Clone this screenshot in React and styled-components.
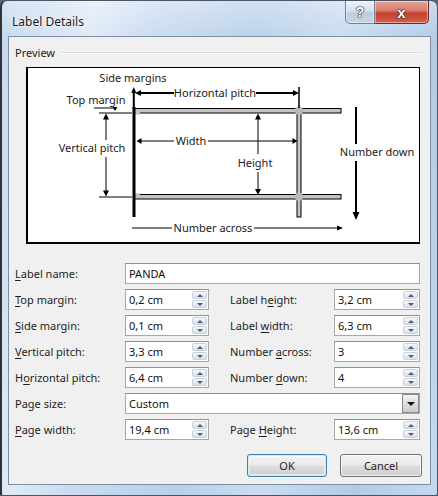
import React from "react";
import styled, { createGlobalStyle } from "styled-components";

const Global = createGlobalStyle`
  html, body { margin: 0; padding: 0; background: #5a6470; }
  body { font-family: "Noto Sans", "Open Sans", sans-serif; }
  * { box-sizing: border-box; }
`;

const Window = styled.div`
  width: 438px;
  height: 496px;
  display: flex;
  flex-direction: column;
  border: 1px solid #4a5666;
  border-left: 2px solid #2f3338;
  border-radius: 7px 7px 3px 3px;
  background:
    linear-gradient(180deg, rgba(255,255,255,0.35) 0%, rgba(255,255,255,0) 40px),
    linear-gradient(100deg, #c3d7ed 0%, #dfeaf6 18%, #c9dbef 30%, #b9d0ea 50%, #cadcf0 66%, #b3cbe7 84%, #c6d9ee 100%);
  overflow: hidden;
`;

const TitleBar = styled.div`
  height: 35px;
  display: flex;
  align-items: flex-start;
  justify-content: space-between;
`;

const Title = styled.div`
  padding: 12px 0 0 10px;
  font-size: 12px;
  color: #1b1b1b;
  text-shadow: 0 0 6px #fff, 0 0 3px #fff;
`;

const Caption = styled.div`
  display: flex;
  margin-right: 8px;
`;

const CapBtn = styled.div`
  height: 23px;
  width: ${(p) => (p.$close ? "54px" : "30px")};
  display: flex;
  align-items: center;
  justify-content: center;
  border: 1px solid ${(p) => (p.$close ? "#6d2a22" : "#6f7f92")};
  border-top: none;
  border-left: ${(p) => (p.$close ? "none" : undefined)};
  border-radius: ${(p) => (p.$close ? "0 0 5px 0" : "0 0 0 5px")};
  background: ${(p) =>
    p.$close
      ? "linear-gradient(180deg, #e9a899 0%, #d9776a 45%, #c4402f 55%, #d2604a 100%)"
      : "linear-gradient(180deg, #eef3f8 0%, #d5e0ec 45%, #bccbdc 55%, #c9d6e4 100%)"};
  box-shadow: inset 0 0 0 1px rgba(255,255,255,0.45);
  font-family: "Liberation Sans", Arial, sans-serif;
  font-weight: bold;
  font-size: ${(p) => (p.$close ? "15px" : "14px")};
  color: #fff;
  text-shadow: 0 0 1px #222, 0 0 1px #222, 0 0 2px #333;
`;

const Client = styled.div`
  margin: 0 6px 0 6px;
  background: #f0f0f0;
  border: 1px solid #7d8ea3;
  display: flex;
  flex-direction: column;
  padding: 0 0 7px 0;
`;

const GroupHeader = styled.div`
  display: flex;
  align-items: center;
  gap: 6px;
  height: 16px;
  margin: 7px 7px 0 6px;
  font-size: 11px;
  color: #1e1e1e;
`;

const GroupLine = styled.div`
  flex: 1;
  height: 2px;
  border-top: 1px solid #d5dfe5;
  border-bottom: 1px solid #ffffff;
  margin-top: 2px;
`;

const PreviewBox = styled.div`
  margin: 7px 0 0 17px;
  width: 394px;
  height: 177px;
  background: #fff;
  border-style: solid;
  border-color: #000;
  border-width: 1px 1px 2px 2px;
  display: flex;
`;

const Form = styled.div`
  margin: 19px 0 0 6px;
  display: grid;
  grid-template-columns: 110px 84px 21px 104px 86px;
  grid-auto-rows: 21px;
  row-gap: 5px;
  align-items: center;
  font-size: 11px;
  color: #1e1e1e;
`;

const Label = styled.div`
  grid-column: ${(p) => p.$col || "auto"};
  white-space: nowrap;
  u { text-decoration-thickness: 1px; text-underline-offset: 2px; }
`;

const Field = styled.div`
  grid-column: ${(p) => p.$span || "auto"};
  height: 21px;
  display: flex;
  align-items: stretch;
  background: #fff;
  border: 1px solid #a3a8b0;
  border-top-color: #8d929a;
  padding: 1px;
`;

const Value = styled.div`
  flex: 1;
  padding-left: 2px;
  line-height: 17px;
  font-size: 11px;
  color: #111;
  white-space: nowrap;
`;

const Spin = styled.div`
  width: 15px;
  display: flex;
  flex-direction: column;
  gap: 1px;
`;

const SpinBtn = styled.div`
  flex: 1;
  display: flex;
  align-items: center;
  justify-content: center;
  border: 1px solid #c9d1db;
  border-radius: 2px;
  background: linear-gradient(180deg, #f6f8fa 0%, #e6ebf1 50%, #d9e0e9 100%);
`;

const Tri = styled.div`
  width: 0;
  height: 0;
  border-left: 3px solid transparent;
  border-right: 3px solid transparent;
  ${(p) =>
    p.$up
      ? "border-bottom: 3px solid #4b5d7e;"
      : "border-top: 3px solid #4b5d7e;"}
`;

const DropBtn = styled.div`
  width: 17px;
  margin: -1px -1px -1px 0;
  display: flex;
  align-items: center;
  justify-content: center;
  border: 1px solid #8a8a8a;
  background: linear-gradient(180deg, #f2f2f2 0%, #dedede 50%, #cdcdcd 100%);
`;

const DropTri = styled.div`
  width: 0;
  height: 0;
  border-left: 4px solid transparent;
  border-right: 4px solid transparent;
  border-top: 4px solid #111;
`;

const Buttons = styled.div`
  display: flex;
  justify-content: flex-end;
  gap: 13px;
  margin: 14px 8px 0 0;
`;

const Btn = styled.div`
  width: ${(p) => (p.$default ? "80px" : "82px")};
  height: 23px;
  display: flex;
  align-items: center;
  justify-content: center;
  font-size: 11px;
  color: #1e1e1e;
  border: 1px solid ${(p) => (p.$default ? "#3c7fb1" : "#707070")};
  border-radius: 3px;
  background: linear-gradient(180deg, #f2f2f2 0%, #ebebeb 49%, #dddddd 51%, #cfcfcf 100%);
  box-shadow: ${(p) =>
    p.$default
      ? "inset 0 0 0 1px #c5ecfc, inset 0 0 0 2px rgba(255,255,255,0.5)"
      : "inset 0 0 0 1px rgba(255,255,255,0.7)"};
`;

const BottomFrame = styled.div`
  flex: 1;
`;

const SpinField = ({ value }) => (
  <Field>
    <Value>{value}</Value>
    <Spin>
      <SpinBtn>
        <Tri $up />
      </SpinBtn>
      <SpinBtn>
        <Tri />
      </SpinBtn>
    </Spin>
  </Field>
);

const up = (x, y, w = 3, h = 6) => `${x},${y} ${x - w},${y + h} ${x + w},${y + h}`;
const down = (x, y, w = 3, h = 6) => `${x},${y} ${x - w},${y - h} ${x + w},${y - h}`;
const left = (x, y, w = 3, h = 6) => `${x},${y} ${x + h},${y - w} ${x + h},${y + w}`;
const right = (x, y, w = 3, h = 6) => `${x},${y} ${x - h},${y - w} ${x - h},${y + w}`;

const Diagram = () => (
  <svg viewBox="29 68 391 174" width="391" height="174">
    <g stroke="#000" fill="none">
      {/* label sheet */}
      <rect x="135" y="108.5" width="207" height="4.5" fill="#c4c4c4" strokeWidth="1" />
      <rect x="135" y="194.5" width="207" height="4.5" fill="#c4c4c4" strokeWidth="1" />
      <rect x="298" y="112" width="4" height="105" fill="#c4c4c4" strokeWidth="1" />
    </g>
    <g fill="#b9b9b9">
      <circle cx="300" cy="110.8" r="4.2" />
      <circle cx="300" cy="196.8" r="4.2" />
      <circle cx="138.5" cy="112.5" r="2.5" fill="#c4c4c4" />
      <circle cx="138.5" cy="195.5" r="2.5" fill="#c4c4c4" />
    </g>
    <rect x="133.5" y="107" width="3" height="110" fill="#000" />
    <rect x="133.8" y="89" width="2" height="20" fill="#000" />
    <polygon points={up(134.8, 87, 2.5, 6)} fill="#000" />

    <g stroke="#000" fill="none">
      {/* horizontal pitch */}
      <line x1="140" y1="93" x2="175" y2="93" strokeWidth="2" />
      <line x1="257" y1="93" x2="297" y2="93" strokeWidth="2" />
      <line x1="300" y1="87" x2="300" y2="108" strokeWidth="1.5" />
      {/* top margin */}
      <line x1="95" y1="108" x2="116" y2="108" strokeWidth="1" />
      <line x1="100" y1="113" x2="133" y2="113" strokeWidth="1" />
      {/* vertical pitch */}
      <line x1="107" y1="118" x2="107" y2="140" strokeWidth="1" />
      <line x1="107" y1="157" x2="107" y2="192" strokeWidth="1" />
      <line x1="100" y1="197" x2="133" y2="197" strokeWidth="1" />
      {/* width */}
      <line x1="141" y1="141" x2="175" y2="141" strokeWidth="1" />
      <line x1="209" y1="141" x2="295" y2="141" strokeWidth="1" />
      {/* height */}
      <line x1="259" y1="118" x2="259" y2="154" strokeWidth="1" />
      <line x1="259" y1="172" x2="259" y2="190" strokeWidth="1" />
      {/* number down */}
      <line x1="357" y1="107" x2="357" y2="144" strokeWidth="2" />
      <line x1="357" y1="161" x2="357" y2="213" strokeWidth="2" />
      {/* number across */}
      <line x1="133" y1="228" x2="173" y2="228" strokeWidth="1" />
      <line x1="255" y1="228" x2="339" y2="228" strokeWidth="1" />
    </g>
    <g fill="#000">
      <polygon points={left(136, 93, 3, 6)} />
      <polygon points={right(300, 93, 3, 6)} />
      <polygon points={down(116, 111, 2.5, 4)} />
      <polygon points={up(107, 113.5, 3, 6)} />
      <polygon points={down(107, 196.5, 3, 6)} />
      <polygon points={left(137.5, 141, 3, 5)} />
      <polygon points={right(298.5, 141, 3, 5)} />
      <polygon points={up(259, 113.5, 3, 6)} />
      <polygon points={down(259, 195, 3, 6)} />
      <polygon points={down(357, 220, 3.5, 8)} />
      <polygon points={right(344, 228, 2.5, 6)} />
    </g>
    <g fontFamily="Noto Sans, Open Sans, sans-serif" fontSize="11" fill="#1a1a1a" textAnchor="middle">
      <text x="134" y="82">Side margins</text>
      <text x="97" y="104">Top margin</text>
      <text x="216" y="97">Horizontal pitch</text>
      <text x="93" y="152">Vertical pitch</text>
      <text x="192" y="145">Width</text>
      <text x="256" y="167">Height</text>
      <text x="378" y="156">Number down</text>
      <text x="214" y="232">Number across</text>
    </g>
  </svg>
);

export default function App() {
  return (
    <>
      <Global />
      <Window>
        <TitleBar>
          <Title>Label Details</Title>
          <Caption>
            <CapBtn>?</CapBtn>
            <CapBtn $close>x</CapBtn>
          </Caption>
        </TitleBar>
        <Client>
          <GroupHeader>
            <span>Preview</span>
            <GroupLine />
          </GroupHeader>
          <PreviewBox>
            <Diagram />
          </PreviewBox>
          <Form>
            <Label><u>L</u>abel name:</Label>
            <Field $span="2 / span 4">
              <Value>PANDA</Value>
            </Field>

            <Label><u>T</u>op margin:</Label>
            <SpinField value="0,2 cm" />
            <Label $col="4">Label h<u>e</u>ight:</Label>
            <SpinField value="3,2 cm" />

            <Label><u>S</u>ide margin:</Label>
            <SpinField value="0,1 cm" />
            <Label $col="4">Label <u>w</u>idth:</Label>
            <SpinField value="6,3 cm" />

            <Label><u>V</u>ertical pitch:</Label>
            <SpinField value="3,3 cm" />
            <Label $col="4">Number <u>a</u>cross:</Label>
            <SpinField value="3" />

            <Label>H<u>o</u>rizontal pitch:</Label>
            <SpinField value="6,4 cm" />
            <Label $col="4">Number <u>d</u>own:</Label>
            <SpinField value="4" />

            <Label>Page size:</Label>
            <Field $span="2 / span 4">
              <Value>Custom</Value>
              <DropBtn>
                <DropTri />
              </DropBtn>
            </Field>

            <Label><u>P</u>age width:</Label>
            <SpinField value="19,4 cm" />
            <Label $col="4">Page <u>H</u>eight:</Label>
            <SpinField value="13,6 cm" />
          </Form>
          <Buttons>
            <Btn $default>OK</Btn>
            <Btn>Cancel</Btn>
          </Buttons>
        </Client>
        <BottomFrame />
      </Window>
    </>
  );
}
